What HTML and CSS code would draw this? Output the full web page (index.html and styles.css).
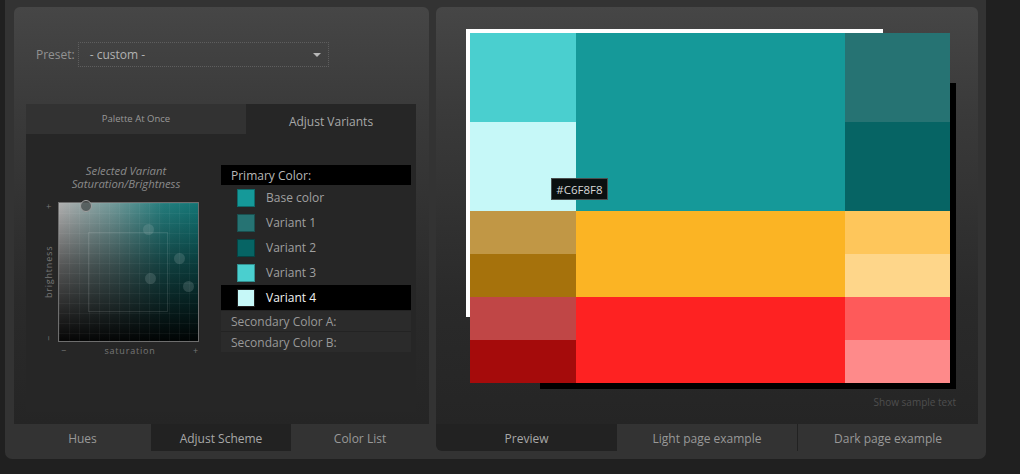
FILE: index.html
```html
<!DOCTYPE html>
<html>
<head>
<meta charset="utf-8">
<link rel="stylesheet" href="styles.css">
</head>
<body>
<div class="app">
  <div class="column col-left">
    <div class="panel-body left-body">
      <div class="preset">
        <span class="preset-label">Preset:</span>
        <div class="select"><span>- custom -</span><span class="arrow"></span></div>
      </div>
      <div class="tabbox">
        <div class="tabbox-head">
          <div class="htab htab-inactive">Palette At Once</div>
          <div class="htab htab-active">Adjust Variants</div>
        </div>
        <div class="tabbox-body">
          <div class="picker-col">
            <div class="picker-title">Selected Variant<br>Saturation/Brightness</div>
            <div class="picker-row">
              <div class="vlabel"><span>−</span><span>brightness</span><span>+</span></div>
              <div class="square">
                <div class="inner-rect"></div>
                <span class="dot dot-faded d1"></span>
                <span class="dot dot-faded d2"></span>
                <span class="dot dot-faded d3"></span>
                <span class="dot dot-faded d4"></span>
                <span class="dot dot-sel"></span>
              </div>
            </div>
            <div class="hlabel"><span>−</span><span>saturation</span><span>+</span></div>
          </div>
          <div class="list">
            <div class="list-head">Primary Color:</div>
            <div class="item"><span class="sw" style="background:#159999"></span>Base color</div>
            <div class="item"><span class="sw" style="background:#267373"></span>Variant 1</div>
            <div class="item"><span class="sw" style="background:#066464"></span>Variant 2</div>
            <div class="item"><span class="sw" style="background:#4ACFCF"></span>Variant 3</div>
            <div class="item item-sel"><span class="sw" style="background:#C6F8F8"></span>Variant 4</div>
            <div class="sec-row">Secondary Color A:</div>
            <div class="sec-row">Secondary Color B:</div>
          </div>
        </div>
      </div>
    </div>
    <div class="tabs">
      <div class="btab w137">Hues</div>
      <div class="btab btab-active w140">Adjust Scheme</div>
      <div class="btab w138">Color List</div>
    </div>
  </div>

  <div class="column col-right">
    <div class="panel-body right-body">
      <div class="stage">
        <div class="sec sec-big">
          <div class="side side-l"><div class="cell" style="background:#4ACFCF"></div><div class="cell" style="background:#C6F8F8"></div></div>
          <div class="mid" style="background:#159999"></div>
          <div class="side side-r"><div class="cell" style="background:#267373"></div><div class="cell" style="background:#066464"></div></div>
        </div>
        <div class="sec sec-small">
          <div class="side side-l"><div class="cell" style="background:#C19745"></div><div class="cell" style="background:#A6720C"></div></div>
          <div class="mid" style="background:#FBB424"></div>
          <div class="side side-r"><div class="cell" style="background:#FEC65B"></div><div class="cell" style="background:#FED68A"></div></div>
        </div>
        <div class="sec sec-small">
          <div class="side side-l"><div class="cell" style="background:#C04646"></div><div class="cell" style="background:#A50B0B"></div></div>
          <div class="mid" style="background:#FE2222"></div>
          <div class="side side-r"><div class="cell" style="background:#FE5A5A"></div><div class="cell" style="background:#FE8A8A"></div></div>
        </div>
        <div class="tooltip">#C6F8F8</div>
      </div>
      <div class="sample">Show sample text</div>
    </div>
    <div class="tabs">
      <div class="btab btab-active btab-round w181">Preview</div>
      <div class="btab w180">Light page example</div>
      <div class="tab-sep"></div>
      <div class="btab w180">Dark page example</div>
    </div>
  </div>
</div>
</body>
</html>
```

FILE: styles.css
```css
* { box-sizing: border-box; }
html, body { margin: 0; padding: 0; }
body {
  background: #202020;
  font-family: "Open Sans", sans-serif;
  font-size: 12px;
  color: #999;
  width: 1020px;
  height: 474px;
  overflow: hidden;
}
.app {
  display: flex;
  gap: 7px;
  margin-left: 5px;
  width: 981px;
  height: 459px;
  padding: 7px 8px 8px 9px;
  background: #333;
  border-radius: 0 0 7px 7px;
}
.column { display: flex; flex-direction: column; }
.col-left { width: 415px; }
.col-right { width: 542px; }
.panel-body {
  flex: 1;
  border-radius: 6px 6px 0 0;
  background: linear-gradient(to bottom, #464646 0%, #3a3a3a 25%, #2a2a2a 70%, #252525 100%);
}
.tabs { height: 27px; display: flex; }
.btab {
  display: flex;
  align-items: center;
  justify-content: center;
  font-size: 12px;
  color: #999;
  line-height: 1;
  padding-top: 2px;
}
.btab-active { background: #222; color: #a8a8a8; }
.btab-round { border-radius: 0 0 0 6px; }
.tab-sep { width: 1px; background: #222; }
.w137 { width: 137px; }
.w140 { width: 140px; }
.w138 { width: 138px; }
.w181 { width: 181px; }
.w180 { width: 180px; }

/* left panel */
.left-body { display: flex; flex-direction: column; padding: 35px 13px 0 12px; }
.preset { display: flex; align-items: center; height: 25px; gap: 3px; padding-left: 10px; }
.preset-label { color: #929292; font-size: 12px; }
.select {
  width: 251px;
  height: 25px;
  border: 1px dotted #5e5e5e;
  display: flex;
  align-items: center;
  justify-content: space-between;
  padding: 0 7px 0 11px;
  color: #b2b2b2;
  font-size: 12px;
}
.arrow {
  width: 0; height: 0;
  border-left: 4px solid transparent;
  border-right: 4px solid transparent;
  border-top: 4px solid #b8b8b8;
  margin-top: 1px;
}
.tabbox {
  margin-top: 37px;
  margin-bottom: 12px;
  flex: 1;
  background: #262626;
  display: flex;
  flex-direction: column;
}
.tabbox-head { display: flex; height: 30px; background: #3a3a3a; }
.htab { display: flex; align-items: center; justify-content: center; }
.htab-inactive { width: 220px; background: #323232; font-size: 9.5px; color: #999; padding-bottom: 2px; }
.htab-active { flex: 1; background: #262626; font-size: 12px; color: #a8a8a8; padding-top: 4px; }
.tabbox-body { display: flex; }
.picker-col { width: 195px; padding: 30px 0 0 17px; }
.picker-title {
  width: 166px;
  text-align: center;
  font-size: 11.3px;
  line-height: 13px;
  font-style: italic;
  color: #8a8a8a;
  margin-bottom: 12px;
}
.picker-row { display: flex; gap: 3px; }
.vlabel {
  width: 12px;
  height: 140px;
  writing-mode: vertical-rl;
  transform: rotate(180deg);
  display: flex;
  justify-content: space-between;
  align-items: center;
  font-size: 9px;
  line-height: 12px;
  letter-spacing: 0.8px;
  color: #777;
  padding: 1px 0;
}
.square {
  position: relative;
  width: 141px;
  height: 140px;
  border: 1px solid #6e6e6e;
  background-image:
    repeating-linear-gradient(to right, rgba(255,255,255,0.04) 0 1px, transparent 1px 10px),
    repeating-linear-gradient(to bottom, rgba(255,255,255,0.04) 0 1px, transparent 1px 10px),
    linear-gradient(to bottom, rgba(0,0,0,0) 0%, rgba(0,0,0,0.5) 45%, rgba(0,0,0,0.97) 100%),
    linear-gradient(to right, #b0b0b0 0%, #6f9999 40%, #247d7d 75%, #137575 100%);
}
.inner-rect {
  position: absolute;
  left: 29px; top: 29px;
  width: 80px; height: 80px;
  border: 1px solid rgba(255,255,255,0.11);
}
.dot { position: absolute; border-radius: 50%; }
.dot-faded { width: 11px; height: 11px; background: rgba(170,190,190,0.2); }
.d1 { left: 83.5px; top: 20.5px; }
.d2 { left: 114.5px; top: 49.5px; }
.d3 { left: 85.5px; top: 69.5px; }
.d4 { left: 123.5px; top: 77.5px; }
.dot-sel {
  width: 12px; height: 12px;
  left: 21px; top: -3.5px;
  border: 1px solid #a0a0a0;
  background: rgba(70,75,75,0.75);
}
.hlabel {
  width: 141px;
  margin: 3px 0 0 15px;
  display: flex;
  justify-content: space-between;
  font-size: 9px;
  line-height: 11px;
  letter-spacing: 0.8px;
  color: #777;
  padding: 0 0 0 3px;
}
.list { width: 190px; margin-top: 31px; }
.list-head {
  height: 20px;
  background: #000;
  color: #b8b8b8;
  padding-left: 10px;
  display: flex;
  align-items: center;
  font-size: 12px;
}
.item {
  height: 25px;
  display: flex;
  align-items: center;
  gap: 11px;
  padding-left: 16px;
  color: #a0a0a0;
  font-size: 12px;
}
.item-sel { background: #000; color: #f2f2f2; }
.sw { width: 18px; height: 18px; border: 1px solid rgba(0,0,0,0.3); }
.item-sel .sw { border-color: #202020; }
.sec-row {
  height: 21px;
  background: #2b2b2b;
  border-top: 1px solid #232323;
  padding-left: 10px;
  display: flex;
  align-items: center;
  color: #999;
  font-size: 12px;
}

/* right panel */
.right-body { display: flex; flex-direction: column; padding: 26px 0 0 34px; }
.stage { position: relative; z-index: 0; width: 480px; }
.stage::before {
  content: "";
  position: absolute;
  left: -4px; top: -4px;
  width: 417px; height: 288px;
  background: #fff;
  z-index: -1;
}
.stage::after {
  content: "";
  position: absolute;
  left: 70px; top: 50px;
  width: 416px; height: 306px;
  background: #000;
  z-index: -1;
}
.sec { display: flex; }
.sec-big { height: 178px; }
.sec-small { height: 86px; }
.side { display: flex; flex-direction: column; }
.side-l { width: 106px; }
.side-r { width: 105px; }
.mid { width: 269px; }
.cell { flex: 1; }
.tooltip {
  position: absolute;
  left: 81px; top: 145px;
  width: 57px; height: 22px;
  background: #0b1010;
  border: 1px solid #4a4f4f;
  color: #d8d8d8;
  font-size: 11.5px;
  display: flex;
  align-items: center;
  justify-content: center;
}
.sample {
  margin-top: 12px;
  text-align: right;
  padding-right: 22px;
  font-size: 10px;
  line-height: 14px;
  color: #4e4e4e;
}
```
